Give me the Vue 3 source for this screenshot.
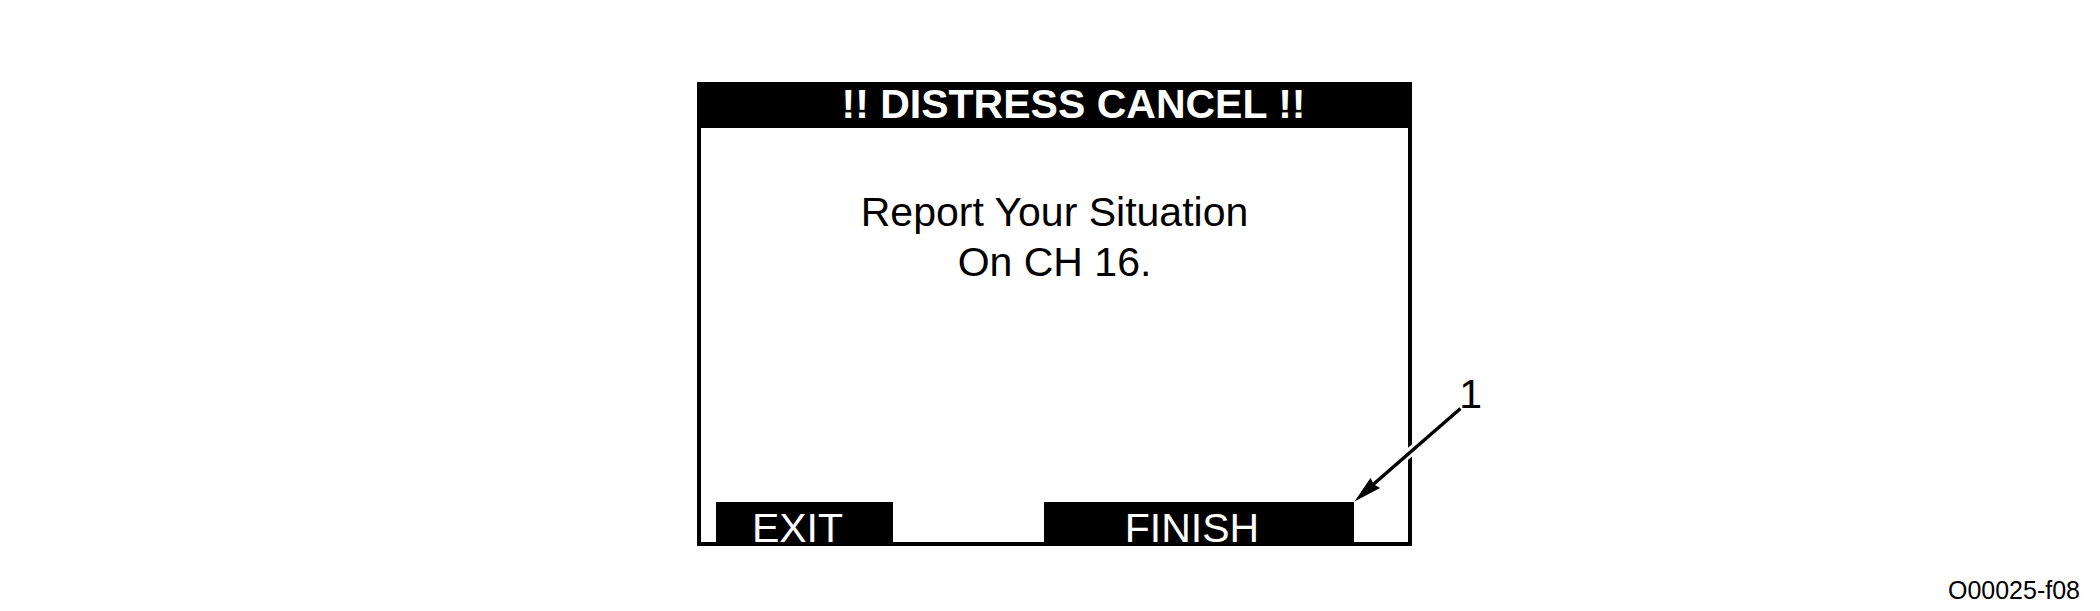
<script setup>
const title = '!! DISTRESS CANCEL !!'
const message = ['Report Your Situation', 'On CH 16.']
</script>

<template>
  <main class="page">
    <figure class="figure">
      <div class="display">
        <section class="screen">
          <h1 class="title">{{ title }}</h1>
          <div class="message">
            <p v-for="line in message" :key="line">{{ line }}</p>
          </div>
          <div class="softkeys">
            <button type="button" class="key exit">EXIT</button>
            <button type="button" class="key finish">FINISH</button>
          </div>
        </section>
        <div class="callout">
          <svg viewBox="0 0 128 132" aria-hidden="true">
            <path d="M36 99.5L90 52.5" stroke="#fff" stroke-width="9" />
            <path d="M18 115.5L106.5 38.5" stroke="#000" stroke-width="3.5" />
            <path d="M0.5 131.5L16.5 108L20 114.5L26 118Z" fill="#000" />
          </svg>
          <span class="number">1</span>
        </div>
      </div>
      <figcaption class="code">O00025-f08</figcaption>
    </figure>
  </main>
</template>

<style>
body {
  margin: 0;
  background: #fff;
}
</style>

<style scoped>
.page {
  font-family: "Liberation Sans", Arial, sans-serif;
  font-size: 41px;
  color: #000;
}

.figure {
  box-sizing: border-box;
  min-height: 100vh;
  margin: 0;
  padding-top: 82px;
  display: grid;
  grid-template-columns: 697fr 715fr 688fr;
  grid-template-rows: auto 1fr;
}

.display {
  grid-column: 2;
  position: relative;
}

.screen {
  border: 4px solid #000;
  display: flex;
  flex-direction: column;
}

.title {
  margin: 0;
  padding: 0 0 6px 38px;
  background: #000;
  color: #fff;
  font-size: 41px;
  line-height: 36px;
  font-weight: 700;
  text-align: center;
  white-space: nowrap;
}

.message {
  padding: 59px 0 215px;
  text-align: center;
  line-height: 50px;
  white-space: nowrap;
}

.message p {
  margin: 0;
}

.softkeys {
  display: grid;
  grid-template-columns: 15fr 177fr 151fr 310fr 54fr;
}

.key {
  margin: 0;
  padding: 12px 14px 0 0;
  border: 0;
  border-radius: 0;
  background: #000;
  color: #fff;
  font: inherit;
  line-height: 28px;
  text-align: center;
  cursor: pointer;
}

.exit {
  grid-column: 2;
}

.finish {
  grid-column: 4;
}

.callout {
  position: absolute;
  right: -70px;
  bottom: 44px;
  width: 128px;
  height: 132px;
  pointer-events: none;
}

.callout svg {
  display: block;
  width: 100%;
  height: 100%;
  fill: none;
}

.number {
  position: absolute;
  top: 0;
  right: 0;
  line-height: 48px;
}

.code {
  grid-column: 1 / -1;
  align-self: end;
  padding: 0 20px 7px 0;
  font-size: 25px;
  line-height: 28px;
  text-align: right;
}
</style>
